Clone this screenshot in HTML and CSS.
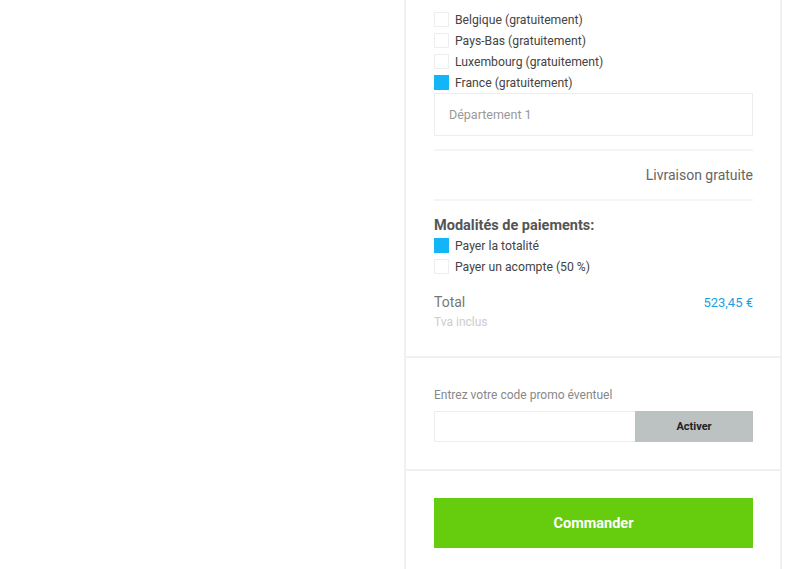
FILE: index.html
```html
<!DOCTYPE html>
<html lang="fr">
<head>
  <meta charset="UTF-8">
  <meta name="viewport" content="width=device-width, initial-scale=1.0">
  <title>Panier</title>
  <link rel="stylesheet" href="styles.css">
</head>
<body>
  <div class="page">
    <div class="left-side"></div>
    <div class="cart">
      <div class="section">
        <div class="option"><span class="box"></span>Belgique (gratuitement)</div>
        <div class="option"><span class="box"></span>Pays-Bas (gratuitement)</div>
        <div class="option"><span class="box"></span>Luxembourg (gratuitement)</div>
        <div class="option"><span class="box checked"></span>France (gratuitement)</div>
        <input type="text" class="dept-input" placeholder="Département 1">
        <div class="delivery">Livraison gratuite</div>
        <p class="pay-title">Modalités de paiements:</p>
        <div class="option"><span class="box checked"></span>Payer la totalité</div>
        <div class="option"><span class="box"></span>Payer un acompte (50 %)</div>
        <div class="total-row">
          <span class="total-label">Total</span>
          <span class="total-price">523,45 €</span>
        </div>
        <p class="tva">Tva inclus</p>
      </div>
      <div class="section promo">
        <p class="promo-label">Entrez votre code promo éventuel</p>
        <div class="promo-row">
          <input type="text" class="promo-input">
          <button class="promo-button">Activer</button>
        </div>
      </div>
      <div class="section order">
        <button class="order-button">Commander</button>
      </div>
    </div>
  </div>
</body>
</html>
```

FILE: styles.css
```css
body {
  margin: 0;
  background: white;
  font-family: Roboto, "Liberation Sans", sans-serif;
  height: 569px;
  overflow: hidden;
}

.page {
  display: flex;
  height: 569px;
}
.left-side {
  flex: 1;
}
.cart {
  width: 374px;
  margin-right: 18px;
  border-left: 2px solid #f0f0f0;
  border-right: 2px solid #f0f0f0;
  height: 100%;
}
.section {
  padding: 0 27px 0 28px;
}
.section:first-child {
  padding-top: 9px;
  padding-bottom: 27px;
  border-bottom: 2px solid #f0f0f0;
}
.option {
  display: flex;
  align-items: center;
  height: 21px;
  font-size: 12.2px;
  color: #444;
}
.box {
  width: 13px;
  height: 13px;
  border: 1px solid #eee;
  margin-right: 6px;
  flex-shrink: 0;
}
.box.checked {
  background-color: #12b5f5;
  border-color: #12b5f5;
}
.dept-input {
  display: block;
  box-sizing: border-box;
  width: 100%;
  height: 43px;
  margin-top: 0;
  border: 1px solid #eee;
  padding: 0 14px;
  font-family: inherit;
  font-size: 12.5px;
  outline: none;
}
.dept-input::placeholder {
  color: #999;
}
.delivery {
  margin-top: 13px;
  border-top: 2px solid #f4f4f4;
  border-bottom: 2px solid #f4f4f4;
  height: 48px;
  display: flex;
  align-items: center;
  justify-content: flex-end;
  font-size: 14px;
  color: #666;
}
.pay-title {
  margin: 16px 0 1px;
  font-size: 14.5px;
  font-weight: bold;
  color: #555;
}
.total-row {
  display: flex;
  justify-content: space-between;
  align-items: center;
  margin-top: 17px;
}
.total-label {
  font-size: 14px;
  color: #777;
}
.total-price {
  font-size: 13px;
  color: #1e9ee0;
}
.tva {
  margin: 5px 0 0;
  font-size: 12px;
  color: #ccc;
}
.promo {
  padding-top: 30px;
  padding-bottom: 27px;
  border-bottom: 2px solid #f0f0f0;
}
.promo-label {
  margin: 0 0 9px;
  font-size: 12px;
  color: #888;
}
.promo-row {
  display: flex;
  height: 31px;
}
.promo-input {
  flex: 1;
  border: 1px solid #eee;
  border-right: none;
  outline: none;
}
.promo-button {
  width: 118px;
  border: none;
  background-color: #bcc1c1;
  color: #222;
  font-family: inherit;
  font-weight: bold;
  font-size: 11px;
}
.order {
  padding-top: 27px;
}
.order-button {
  width: 100%;
  height: 50px;
  border: none;
  background-color: #66cc0e;
  color: white;
  font-family: inherit;
  font-weight: bold;
  font-size: 14.5px;
}
```
